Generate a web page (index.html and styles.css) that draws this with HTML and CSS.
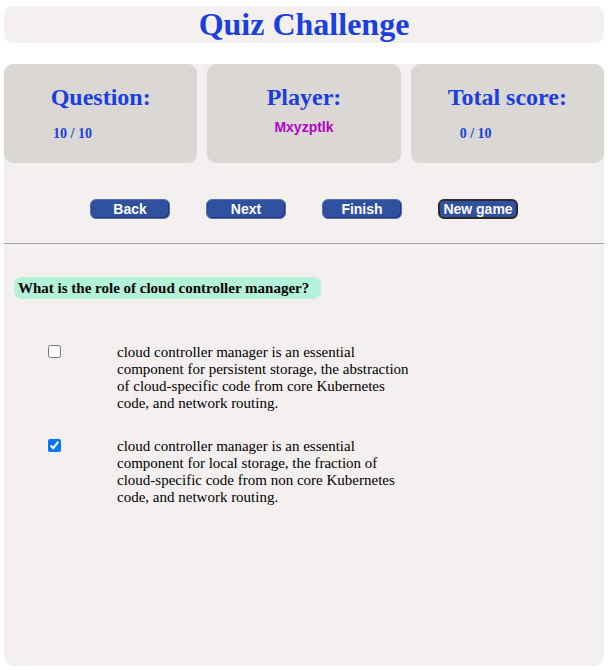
FILE: index.html
```html
<!DOCTYPE html>
<html>
<head>
<meta charset="utf-8">
<link rel="stylesheet" href="styles.css">
</head>
<body>
<header class="title-box"><h1 class="title">Quiz Challenge</h1></header>
<main class="board">
  <section class="stats">
    <div class="card">
      <h2 class="card-head">Question:</h2>
      <p class="card-value">10 / 10</p>
    </div>
    <div class="card">
      <h2 class="card-head">Player:</h2>
      <p class="player">Mxyzptlk</p>
    </div>
    <div class="card">
      <h2 class="card-head">Total score:</h2>
      <p class="card-value">0 / 10</p>
    </div>
  </section>
  <nav class="controls">
    <button class="btn">Back</button>
    <button class="btn">Next</button>
    <button class="btn">Finish</button>
    <button class="btn btn-focus">New game</button>
  </nav>
  <hr class="divider">
  <div class="question">What is the role of cloud controller manager?</div>
  <ul class="options">
    <li class="option">
      <input type="checkbox" class="check">
      <span class="option-text">cloud controller manager is an essential component for persistent storage, the abstraction of cloud-specific code from core Kubernetes code, and network routing.</span>
    </li>
    <li class="option">
      <input type="checkbox" class="check" checked>
      <span class="option-text">cloud controller manager is an essential component for local storage, the fraction of cloud-specific code from non core Kubernetes code, and network routing.</span>
    </li>
  </ul>
</main>
</body>
</html>
```
FILE: styles.css
```css
html, body { background: #ffffff; }
body {
  margin: 6px 4px 4px 4px;
  font-family: "Liberation Serif", "Times New Roman", serif;
}
.title-box {
  background: #f4f0f0;
  border-radius: 9px;
  height: 37px;
  display: flex;
  justify-content: center;
  align-items: center;
}
.title {
  margin: 0;
  font-size: 32px;
  font-weight: bold;
  color: #1a3fe0;
  line-height: 37px;
}
.board {
  margin-top: 21px;
  background: #f4f0ef;
  border-radius: 10px;
  height: 602px;
}
.stats {
  display: grid;
  grid-template-columns: 1fr 1fr 1fr;
  gap: 10px;
}
.card {
  background: #dad7d5;
  border-radius: 9px;
  height: 99px;
  box-sizing: border-box;
  padding-top: 19px;
}
.card-head {
  margin: 0;
  text-align: center;
  font-size: 24px;
  font-weight: bold;
  color: #1a3fe0;
  line-height: 28px;
}
.card-value {
  margin: 15px 0 0 0;
  padding-left: 49px;
  font-size: 14px;
  font-weight: bold;
  color: #1a3fe0;
}
.player {
  margin: 8px 0 0 0;
  text-align: center;
  font-family: "Liberation Sans", Arial, sans-serif;
  font-size: 14px;
  font-weight: bold;
  color: #b400c8;
}
.controls {
  display: flex;
  justify-content: center;
  gap: 36px;
  margin-top: 36px;
}
.btn {
  width: 80px;
  height: 20px;
  padding: 0;
  background: #3050a0;
  color: #ffffff;
  font-family: "Liberation Sans", Arial, sans-serif;
  font-size: 14px;
  font-weight: bold;
  border: 1px solid #5a6ea8;
  border-radius: 6px;
  box-shadow: inset -1px -1px 0 #24397a;
}
.btn-focus {
  border: 2px solid #2b2b2b;
  box-shadow: none;
}
.divider {
  margin: 24px 0 0 0;
  border: 0;
  border-top: 1px solid #a3a3a3;
  height: 0;
}
.question {
  display: inline-block;
  margin: 33px 0 0 10px;
  padding: 0 12px 0 4px;
  height: 22px;
  line-height: 22px;
  background: #b4f2da;
  border-radius: 8px;
  font-size: 15px;
  font-weight: bold;
  color: #000000;
}
.options {
  list-style: none;
  margin: 45px 0 0 0;
  padding: 0;
}
.option {
  display: flex;
  align-items: flex-start;
  margin-bottom: 26px;
}
.check {
  margin: 1px 0 0 44px;
  width: 13px;
  height: 13px;
  flex: none;
}
.option-text {
  margin-left: 56px;
  width: 295px;
  font-size: 15px;
  line-height: 17px;
  color: #000000;
}
```
